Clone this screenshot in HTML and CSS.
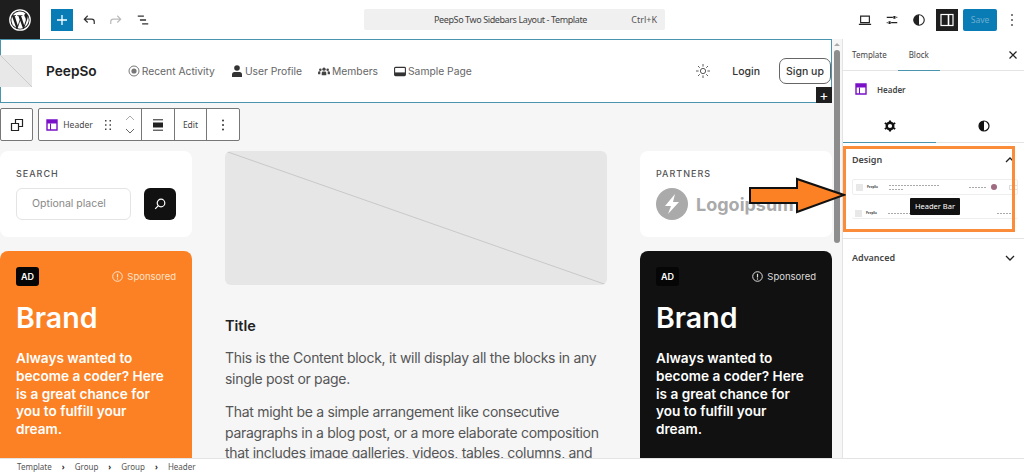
FILE: index.html
```html
<!DOCTYPE html>
<html>
<head>
    <title>PeepSo Two Sidebars Layout - Template</title>
    <link rel="stylesheet" href="styles.css">
</head>
<body>
    <div class="editor">
        <div class="topbar">
            <div class="wp-logo">
                <svg width="24" height="24" viewBox="0 0 24 24"><circle cx="12" cy="12" r="10.2" fill="none" stroke="#fff" stroke-width="1.3"/><path fill="#fff" d="M3.4 12a8.6 8.6 0 0 0 4.8 7.7L4.1 8.5A8.5 8.5 0 0 0 3.4 12zm14.4-.4c0-1.1-.4-1.8-.7-2.4-.4-.7-.8-1.300-.8-2 0-.8.6-1.500 1.400-1.500h.1A8.600 8.600 0 0 0 4.800 7.300h.6c.9 0 2.300-.1 2.300-.1.500 0 .5.700 0 .8l-1 .1 3.100 9.300 1.900-5.700-1.300-3.600-.9-.1c-.5 0-.4-.8 0-.8 0 0 1.400.1 2.300.1.900 0 2.300-.1 2.300-.1.500 0 .5.700 0 .8l-1 .1 3.100 9.200.9-2.800c.4-1.200.7-2 .7-2.700zm-5.600 1.200l-2.600 7.500a8.600 8.600 0 0 0 5.300-.1l-.1-.1-2.600-7.300zm7.400-4.900l.1.900c0 .9-.2 1.900-.7 3.100l-2.600 7.600a8.600 8.600 0 0 0 3.200-11.600z"/></svg>
            </div>
            <div class="tools-left">
                <button class="add-btn">
                    <svg width="14" height="14" viewBox="0 0 14 14"><path d="M7 2v10M2 7h10" stroke="#fff" stroke-width="1.300"/></svg>
                </button>
                <svg class="tool" width="14" height="14" viewBox="0 0 16 16"><path d="M14 12.500V10a3 3 0 0 0-3-3H3M6.500 3.200L2.700 7l3.800 3.800" fill="none" stroke="#333" stroke-width="1.400"/></svg>
                <svg class="tool" width="14" height="14" viewBox="0 0 16 16"><path d="M2 12.500V10a3 3 0 0 1 3-3h8M9.500 3.200L13.300 7l-3.800 3.800" fill="none" stroke="#bbb" stroke-width="1.400"/></svg>
                <svg class="tool" width="14" height="14" viewBox="0 0 16 16"><path d="M2 3.500h7M4.500 8h7M7 12.500h7" stroke="#333" stroke-width="1.500"/></svg>
            </div>
            <div class="command-bar">
                <span class="command-title">PeepSo Two Sidebars Layout - Template</span>
                <span class="command-key">Ctrl+K</span>
            </div>
            <div class="tools-right">
                <svg width="14" height="14" viewBox="0 0 16 16"><path d="M3 3.500h10v7.500H3zM1 13h14" fill="none" stroke="#222" stroke-width="1.300"/></svg>
                <svg width="14" height="14" viewBox="0 0 16 16"><path d="M2 5h7M13 5h1M2 11h1M7 11h7" stroke="#222" stroke-width="1.300"/><path d="M9.500 3.500h2.500v3H9.500zM4 9.500h2.500v3H4z" fill="#222"/></svg>
                <svg width="14" height="14" viewBox="0 0 16 16"><circle cx="8" cy="8" r="6" fill="none" stroke="#222" stroke-width="1.300"/><path d="M8 2a6 6 0 0 0 0 12z" fill="#222"/></svg>
                <button class="panel-btn">
                    <svg width="14" height="14" viewBox="0 0 14 14"><rect x="1" y="1.500" width="12" height="11" fill="none" stroke="#fff" stroke-width="1.200"/><path d="M8.500 1.500v11" stroke="#fff" stroke-width="1.600"/></svg>
                </button>
                <button class="save-btn">Save</button>
                <svg class="more" width="4" height="14" viewBox="0 0 4 14"><circle cx="2" cy="2" r="1" fill="#555"/><circle cx="2" cy="7" r="1" fill="#555"/><circle cx="2" cy="12" r="1" fill="#555"/></svg>
            </div>
        </div>

        <div class="workspace">
            <div class="canvas">
                <div class="site-header">
                    <svg class="site-logo" width="32" height="32" viewBox="0 0 32 32"><rect width="32" height="32" fill="#e8e8e8"/><path d="M0 0l32 32" stroke="#ccc"/></svg>
                    <span class="site-name">PeepSo</span>
                    <nav class="site-nav">
                        <a><svg width="12" height="12" viewBox="0 0 12 12"><circle cx="6" cy="6" r="5" fill="none" stroke="#777"/><circle cx="6" cy="6" r="2.600" fill="#777"/></svg>Recent Activity</a>
                        <a><svg width="12" height="12" viewBox="0 0 12 12"><circle cx="6" cy="3" r="2.800" fill="#333"/><path d="M1 12V9.500Q1 7 3.500 7h5Q11 7 11 9.500V12z" fill="#333"/></svg>User Profile</a>
                        <a><svg width="12" height="11" viewBox="0 0 13 12"><circle cx="6.500" cy="3.500" r="1.800" fill="#444"/><circle cx="2.500" cy="4" r="1.400" fill="#444"/><circle cx="10.500" cy="4" r="1.400" fill="#444"/><path d="M4 10V7.500Q4 6 5.500 6h2Q9 6 9 7.500V10zM0 9V7q0-1.300 1.500-1.300h1V9zM13 9V7q0-1.300-1.500-1.300h-1V9z" fill="#444"/></svg>Members</a>
                        <a><svg width="12" height="11" viewBox="0 0 13 12"><rect x=".6" y="1.500" width="11.800" height="9" rx="1" fill="none" stroke="#333" stroke-width="1.200"/><path d="M1 7h11v3H1z" fill="#333"/></svg>Sample Page</a>
                    </nav>
                    <svg class="sun" width="14" height="14" viewBox="0 0 16 16"><circle cx="8" cy="8" r="3" fill="none" stroke="#444"/><path d="M8 0v3M8 13v3M0 8h3M13 8h3M2.300 2.300l2 2M11.700 11.700l2 2M2.300 13.700l2-2M11.700 4.300l2-2" stroke="#444"/></svg>
                    <span class="login">Login</span>
                    <span class="signup">Sign up</span>
                    <span class="header-plus">+</span>
                </div>

                <div class="block-toolbar">
                    <div class="toolbar-group">
                        <svg width="14" height="14" viewBox="0 0 14 14"><path d="M1.500 5.500h7v7h-7zM5.500 5.500v-4h7v7h-4" fill="none" stroke="#222" stroke-width="1.200"/></svg>
                    </div>
                    <div class="toolbar-group toolbar-main">
                        <div class="toolbar-cell cell-block">
                            <svg width="12" height="12" viewBox="0 0 12 12"><path d="M1 1h10v10H1z" fill="none" stroke="#7a10c8" stroke-width="1.400"/><path d="M1 1h10v3.500H1z" fill="#7a10c8"/><path d="M4.500 4.500V11" stroke="#7a10c8"/></svg>
                            <span>Header</span>
                            <svg class="drag" width="8" height="12" viewBox="0 0 8 12"><path d="M1 1h1.500v1.500H1zM5.500 1H7v1.500H5.500zM1 5.200h1.500v1.500H1zM5.500 5.200H7v1.500H5.500zM1 9.500h1.500V11H1zM5.500 9.500H7V11H5.500z" fill="#444"/></svg>
                            <div class="movers">
                                <svg width="10" height="6" viewBox="0 0 10 6"><path d="M1 5l4-4 4 4" fill="none" stroke="#aaa"/></svg>
                                <svg width="10" height="6" viewBox="0 0 10 6"><path d="M1 1l4 4 4-4" fill="none" stroke="#666"/></svg>
                            </div>
                        </div>
                        <div class="toolbar-cell cell-align">
                            <svg width="12" height="12" viewBox="0 0 12 12"><path d="M1 .8h10M1 11.200h10" stroke="#222"/><path d="M1 3.500h10v5H1z" fill="#222"/></svg>
                        </div>
                        <div class="toolbar-cell cell-edit">Edit</div>
                        <div class="toolbar-cell cell-more">
                            <svg width="4" height="12" viewBox="0 0 4 12"><circle cx="2" cy="1.500" r="1" fill="#333"/><circle cx="2" cy="6" r="1" fill="#333"/><circle cx="2" cy="10.500" r="1" fill="#333"/></svg>
                        </div>
                    </div>
                </div>

                <div class="columns">
                    <div class="side-col">
                        <div class="card search-card">
                            <div class="card-label">SEARCH</div>
                            <div class="search-row">
                                <div class="search-input">Optional placel</div>
                                <button class="search-btn">
                                    <svg width="12" height="12" viewBox="0 0 12 12"><circle cx="7" cy="5" r="3.800" fill="none" stroke="#fff" stroke-width="1.200"/><path d="M4.200 7.800L1.200 10.800" stroke="#fff" stroke-width="1.200"/></svg>
                                </button>
                            </div>
                        </div>
                        <div class="ad ad-orange">
                            <div class="ad-top">
                                <span class="ad-badge">AD</span>
                                <span class="sponsored"><svg width="11" height="11" viewBox="0 0 11 11"><circle cx="5.500" cy="5.500" r="4.800" fill="none" stroke="currentColor"/><path d="M5.500 2.800v3.700" stroke="currentColor" stroke-width="1.200"/><circle cx="5.500" cy="8" r=".7" fill="currentColor"/></svg>Sponsored</span>
                            </div>
                            <div class="ad-brand">Brand</div>
                            <div class="ad-text">Always wanted to become a coder? Here is a great chance for you to fulfill your dream.</div>
                        </div>
                    </div>

                    <div class="main-col">
                        <svg class="featured" width="382" height="134" viewBox="0 0 382 134"><path d="M0 0L382 134" stroke="#bbb" stroke-width=".7"/></svg>
                        <h3 class="post-title">Title</h3>
                        <p>This is the Content block, it will display all the blocks in any single post or page.</p>
                        <p>That might be a simple arrangement like consecutive paragraphs in a blog post, or a more elaborate composition that includes image galleries, videos, tables, columns, and</p>
                    </div>

                    <div class="side-col">
                        <div class="card partners-card">
                            <div class="card-label">PARTNERS</div>
                            <div class="partner-logo">
                                <svg width="32" height="32" viewBox="0 0 32 32"><circle cx="16" cy="16" r="16" fill="#aaa"/><path d="M19 6L9 18h6l-3 8 11-12h-6z" fill="#fff"/></svg>
                                <span>Logoipsum</span>
                            </div>
                        </div>
                        <div class="ad ad-black">
                            <div class="ad-top">
                                <span class="ad-badge">AD</span>
                                <span class="sponsored"><svg width="11" height="11" viewBox="0 0 11 11"><circle cx="5.500" cy="5.500" r="4.800" fill="none" stroke="currentColor"/><path d="M5.500 2.800v3.700" stroke="currentColor" stroke-width="1.200"/><circle cx="5.500" cy="8" r=".7" fill="currentColor"/></svg>Sponsored</span>
                            </div>
                            <div class="ad-brand">Brand</div>
                            <div class="ad-text">Always wanted to become a coder? Here is a great chance for you to fulfill your dream.</div>
                        </div>
                    </div>
                </div>

                <div class="scrollbar"><span class="scroll-up"></span><span class="scroll-thumb"></span></div>
            </div>

            <div class="sidebar">
                <div class="side-tabs">
                    <span class="side-tab">Template</span>
                    <span class="side-tab active">Block</span>
                    <svg class="side-close" width="10" height="10" viewBox="0 0 10 10"><path d="M1.500 1.500l7 7M8.500 1.500l-7 7" stroke="#222" stroke-width="1.200"/></svg>
                </div>
                <div class="block-card">
                    <svg width="12" height="12" viewBox="0 0 12 12"><path d="M1 1h10v10H1z" fill="none" stroke="#7a10c8" stroke-width="1.400"/><path d="M1 1h10v3.500H1z" fill="#7a10c8"/><path d="M4.500 4.500V11" stroke="#7a10c8"/></svg>
                    <span>Header</span>
                </div>
                <div class="style-tabs">
                    <div class="style-tab active">
                        <svg width="12" height="12" viewBox="0 0 12 12"><circle cx="6" cy="6" r="3.300" fill="none" stroke="#111" stroke-width="2.400"/><path d="M6 .5v2M6 9.500v2M.8 3l1.800 1M9.400 8l1.800 1M.8 9l1.800-1M9.400 4l1.800-1" stroke="#111" stroke-width="2"/></svg>
                    </div>
                    <div class="style-tab">
                        <svg width="12" height="12" viewBox="0 0 12 12"><circle cx="6" cy="6" r="5" fill="none" stroke="#111" stroke-width="1.200"/><path d="M6 1a5 5 0 0 0 0 10z" fill="#111"/></svg>
                    </div>
                </div>
                <div class="design-section">
                    <div class="section-head">
                        <span>Design</span>
                        <svg width="10" height="6" viewBox="0 0 10 6"><path d="M1 5l4-4 4 4" fill="none" stroke="#222" stroke-width="1.300"/></svg>
                    </div>
                    <div class="pattern">
                        <span class="pattern-logo"></span><b>PeepSo</b>
                        <span class="pattern-nav"><i class="pattern-links"></i><i class="pattern-links short"></i></span>
                        <i class="pattern-links tiny"></i><i class="pattern-dot"></i><i class="pattern-btn"></i>
                    </div>
                    <div class="pattern pattern-small">
                        <span class="pattern-logo"></span><b>PeepSo</b>
                        <span class="pattern-nav"><i class="pattern-links"></i></span>
                        <i class="pattern-links tiny"></i><i class="pattern-btn"></i>
                    </div>
                    <div class="tooltip">Header Bar</div>
                    <div class="orange-box"></div>
                </div>
                <div class="section-head advanced">
                    <span>Advanced</span>
                    <svg width="10" height="6" viewBox="0 0 10 6"><path d="M1 1l4 4 4-4" fill="none" stroke="#222" stroke-width="1.300"/></svg>
                </div>
            </div>

            <svg class="callout-arrow" width="98" height="37" viewBox="0 0 98 37"><path d="M2 11H49V2L96 18 49 35V26H2z" fill="#fb8124" stroke="#111" stroke-width="2"/></svg>
        </div>

        <div class="statusbar">
            <span>Template</span><i>›</i><span>Group</span><i>›</i><span>Group</span><i>›</i><span>Header</span>
        </div>
    </div>
</body>
</html>
```
FILE: styles.css
```css
* {
    box-sizing: border-box;
}

html, body {
    margin: 0;
    padding: 0;
    height: 100%;
    overflow: hidden;
}

body {
    font-family: "Noto Sans", sans-serif;
    color: #222;
    background-color: #fff;
}

button {
    border: none;
    padding: 0;
    font-family: inherit;
}

.editor {
    height: 473px;
    display: flex;
    flex-direction: column;
}

/* top bar */

.topbar {
    height: 39px;
    flex: none;
    display: flex;
    align-items: center;
    position: relative;
}

.wp-logo {
    width: 40px;
    height: 39px;
    background-color: #1e1e1e;
    display: flex;
    align-items: center;
    justify-content: center;
}

.tools-left {
    display: flex;
    align-items: center;
    margin-left: 11px;
}

.add-btn {
    width: 22px;
    height: 22px;
    background-color: #0a7cb5;
    display: flex;
    align-items: center;
    justify-content: center;
    margin-right: 9px;
}

.tools-left .tool {
    margin-right: 13px;
}

.command-bar {
    width: 301px;
    height: 21px;
    margin-left: 201px;
    background-color: #f0f0f0;
    border-radius: 2px;
    display: flex;
    align-items: center;
    font-size: 9px;
    color: #444;
    position: relative;
}

.command-title {
    width: 100%;
    text-align: center;
    padding-right: 8px;
    letter-spacing: -.4px;
}

.command-key {
    position: absolute;
    right: 8px;
    font-size: 9px;
    color: #555;
}

.tools-right {
    display: flex;
    align-items: center;
    margin-left: auto;
}

.tools-right > svg {
    margin-right: 13px;
}

.tools-right .more {
    margin: 0 10px 0 13px;
}

.panel-btn {
    width: 22px;
    height: 22px;
    background-color: #1e1e1e;
    display: flex;
    align-items: center;
    justify-content: center;
    margin-left: -3px;
}

.save-btn {
    width: 34px;
    height: 22px;
    margin-left: 5px;
    background-color: #0a7cb5;
    color: #6aaed0;
    font-size: 8.500px;
    border-radius: 2px;
}

/* canvas */

.workspace {
    flex: 1;
    display: flex;
    min-height: 0;
    position: relative;
}

.canvas {
    width: 842px;
    flex: none;
    background-color: #f6f6f7;
    position: relative;
    overflow: hidden;
    font-family: Inter, sans-serif;
}

.site-header {
    width: 832px;
    height: 64px;
    background-color: #fff;
    border: 1px solid #4a95ad;
    display: flex;
    align-items: center;
    position: relative;
}

.site-logo {
    margin-left: -1px;
    flex: none;
}

.site-name {
    font-size: 13.700px;
    font-weight: 600;
    color: #222;
    margin-left: 14px;
}

.site-nav {
    display: flex;
    gap: 16px;
    margin-left: 31px;
    font-size: 10.300px;
    color: #666;
}

.site-nav a {
    display: flex;
    align-items: center;
    gap: 2px;
}

.sun {
    margin-left: auto;
}

.login {
    font-size: 10.500px;
    font-weight: 500;
    margin-left: 22px;
    color: #333;
}

.signup {
    font-size: 10.500px;
    font-weight: 500;
    color: #333;
    height: 26px;
    width: 52px;
    margin-left: 19px;
    border: 1px solid #666;
    border-radius: 7px;
    display: flex;
    align-items: center;
    justify-content: center;
    flex: none;
}

.header-plus {
    position: absolute;
    right: -1px;
    bottom: -1px;
    width: 16px;
    height: 16px;
    background-color: #1e1e1e;
    color: #fff;
    font-size: 14px;
    line-height: 15px;
    text-align: center;
}

/* floating block toolbar */

.block-toolbar {
    position: absolute;
    left: 0;
    top: 69px;
    display: flex;
    gap: 5px;
    font-family: "Noto Sans", sans-serif;
    font-size: 8.500px;
    color: #444;
    z-index: 2;
}

.toolbar-group {
    height: 33px;
    width: 33px;
    background-color: #fff;
    border: 1px solid #777;
    border-radius: 2px;
    display: flex;
    align-items: center;
    justify-content: center;
}

.toolbar-main {
    width: 202px;
    justify-content: flex-start;
}

.toolbar-cell {
    height: 100%;
    display: flex;
    align-items: center;
    justify-content: center;
    border-right: 1px solid #777;
    flex: none;
}

.toolbar-cell:last-child {
    border-right: none;
}

.cell-block {
    width: 103px;
    gap: 5px;
    padding-left: 1px;
}

.cell-block .drag {
    margin-left: 6px;
}

.movers {
    display: flex;
    flex-direction: column;
    gap: 7px;
    margin-left: 8px;
}

.cell-align {
    width: 33px;
}

.cell-edit {
    width: 32px;
}

.cell-more {
    width: 32px;
}

/* page columns */

.columns {
    display: grid;
    grid-template-columns: 192px 382px 192px;
    column-gap: 33px;
    width: 832px;
    padding-top: 48px;
}

.side-col {
    display: flex;
    flex-direction: column;
    gap: 14px;
}

.card {
    height: 86px;
    background-color: #fff;
    border-radius: 8px;
    padding: 17px 16px 16px;
}

.card-label {
    font-size: 9px;
    font-weight: 500;
    letter-spacing: 1px;
    color: #555;
    line-height: 12px;
}

.search-row {
    display: flex;
    justify-content: space-between;
    margin-top: 8px;
}

.search-input {
    width: 115px;
    height: 32px;
    border: 1px solid #e4e4e4;
    border-radius: 6px;
    font-size: 10.500px;
    color: #888;
    line-height: 30px;
    padding-left: 15px;
    white-space: nowrap;
}

.search-btn {
    width: 32px;
    height: 32px;
    background-color: #111;
    border-radius: 6px;
    display: flex;
    align-items: center;
    justify-content: center;
}

.partner-logo {
    display: flex;
    align-items: center;
    gap: 8px;
    margin-top: 8px;
    font-size: 18px;
    font-weight: 700;
    color: #aaa;
    white-space: nowrap;
}

.partner-logo svg {
    flex: none;
}

.ad {
    height: 240px;
    padding: 16px;
    border-radius: 8px 8px 0 0;
    color: #fff;
}

.ad-orange {
    background-color: #fb8124;
}

.ad-black {
    background-color: #111;
}

.ad-top {
    display: flex;
    align-items: center;
    justify-content: space-between;
}

.ad-badge {
    width: 23px;
    height: 19px;
    background-color: #060606;
    color: #fff;
    border-radius: 3px;
    font-size: 9px;
    font-weight: 600;
    text-align: center;
    line-height: 19px;
}

.sponsored {
    display: flex;
    align-items: center;
    gap: 4px;
    font-size: 9.500px;
    color: #ffe3cc;
}

.ad-black .sponsored {
    color: #ddd;
}

.ad-brand {
    font-size: 28.500px;
    font-weight: 600;
    line-height: 36px;
    margin-top: 14px;
}

.ad-text {
    font-size: 13.600px;
    font-weight: 600;
    line-height: 17.800px;
    margin-top: 14px;
}

.main-col {
    font-size: 14px;
    letter-spacing: -.3px;
    line-height: 20.500px;
    color: #555;
}

.featured {
    display: block;
    background-color: #e6e6e6;
    border-radius: 6px;
}

.post-title {
    font-size: 14.500px;
    font-weight: 600;
    letter-spacing: 0;
    color: #222;
    margin: 30px 0 0;
    line-height: 22px;
}

.main-col p {
    margin: 11px 0 0;
}

.main-col p + p {
    margin-top: 13px;
}

.scrollbar {
    position: absolute;
    left: 834px;
    top: 0;
    bottom: 0;
    width: 6px;
}

.scroll-up {
    display: block;
    margin: 4px 0 0;
    border-left: 3px solid transparent;
    border-right: 3px solid transparent;
    border-bottom: 3px solid #aaa;
    width: 6px;
}

.scroll-thumb {
    display: block;
    margin-top: 4px;
    height: 193px;
    background-color: #8d8d8d;
    border-radius: 3px;
}

/* right sidebar */

.sidebar {
    flex: 1;
    border-left: 1px solid #e4e4e4;
    font-size: 8px;
    color: #444;
}

.side-tabs {
    height: 32px;
    display: flex;
    align-items: stretch;
    padding-left: 3px;
    border-bottom: 1px solid #e4e4e4;
    position: relative;
}

.side-tab {
    display: flex;
    align-items: center;
    padding: 0 6px;
    margin-right: 5px;
}

.side-tab.active {
    width: 42px;
    justify-content: center;
    border-bottom: 1px solid #4a95ad;
    margin-bottom: -1px;
}

.side-close {
    position: absolute;
    right: 6px;
    top: 11px;
}

.block-card {
    height: 36px;
    display: flex;
    align-items: center;
    gap: 10px;
    padding-left: 12px;
    font-weight: 600;
}

.style-tabs {
    display: flex;
    height: 36px;
    border-bottom: 1px solid #e4e4e4;
}

.style-tab {
    flex: 1;
    padding: 3px 0 0 8px;
    display: flex;
    align-items: center;
    justify-content: center;
}

.style-tab.active {
    flex: none;
    width: 93px;
    padding-left: 0;
    border-bottom: 1px solid #4a95ad;
    margin-bottom: -1px;
}

.section-head {
    display: flex;
    align-items: center;
    justify-content: space-between;
    padding: 0 9px;
    height: 17px;
    font-weight: 600;
    font-size: 9px;
}

.design-section {
    height: 96px;
    padding-top: 8px;
    border-bottom: 1px solid #e4e4e4;
    position: relative;
}

.advanced {
    margin-top: 10px;
}

.pattern {
    width: 166px;
    height: 16px;
    margin: 11px 0 0 9px;
    border: 1px solid #eee;
    border-radius: 2px;
    display: flex;
    align-items: center;
    padding-left: 3px;
    font-size: 3px;
    gap: 4px;
    overflow: hidden;
    position: relative;
    z-index: 0;
}

.pattern-small {
    height: 11px;
    margin-top: 13px;
    border-width: 0 0 1px;
}

.pattern-logo {
    width: 7px;
    height: 7px;
    flex: none;
    background-color: #e8e8e8;
}

.pattern-nav {
    display: flex;
    flex-direction: column;
    gap: 3px;
    margin-left: 7px;
}

.pattern-links {
    display: block;
    width: 51px;
    height: 1px;
    background: repeating-linear-gradient(90deg, #aaa 0 2px, transparent 2px 3px);
}

.pattern-links.short {
    width: 14px;
}

.pattern-links.tiny {
    width: 18px;
    margin-left: 25px;
    flex: none;
}

.pattern-dot {
    width: 6px;
    height: 6px;
    flex: none;
    border-radius: 50%;
    background-color: #a06a80;
}

.pattern-btn {
    width: 10px;
    height: 5px;
    flex: none;
    border: 1px solid #ddd;
    margin-left: 8px;
}

.pattern-small .pattern-links.tiny {
    margin-left: 54px;
}

.tooltip {
    position: absolute;
    left: 67px;
    top: 55px;
    width: 50px;
    height: 17px;
    background-color: #111;
    color: #fff;
    font-size: 7.500px;
    line-height: 17px;
    text-align: center;
    border-radius: 1px;
    z-index: 1;
}

.orange-box {
    position: absolute;
    left: 0;
    top: 3px;
    width: 172px;
    height: 86px;
    border: 3px solid #fb8c3a;
    z-index: 2;
}

.callout-arrow {
    position: absolute;
    left: 748px;
    top: 138px;
    z-index: 3;
}

/* breadcrumb */

.statusbar {
    height: 15px;
    flex: none;
    display: flex;
    align-items: center;
    gap: 10px;
    padding-left: 17px;
    font-size: 8px;
    color: #555;
    background-color: #fff;
    border-top: 1px solid #e4e4e4;
    position: relative;
}

.statusbar i {
    font-style: normal;
    color: #222;
    font-weight: 700;
}
```
